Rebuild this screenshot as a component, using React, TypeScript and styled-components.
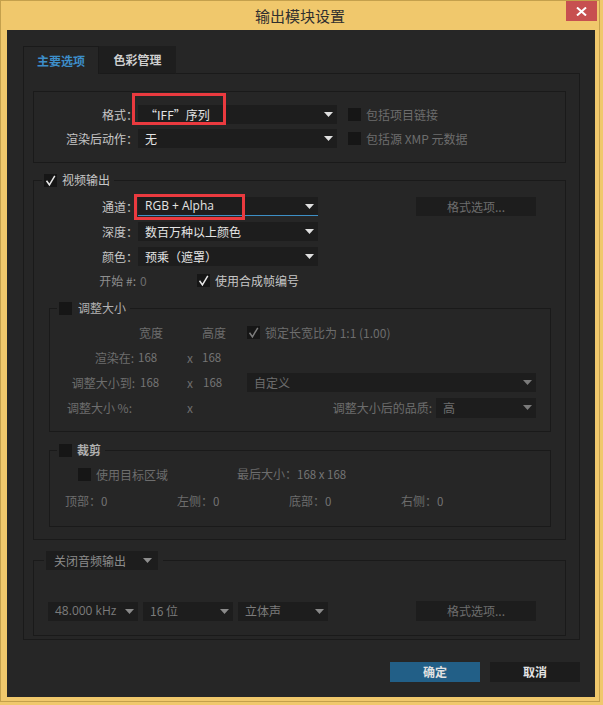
import React from "react";
import styled, { createGlobalStyle } from "styled-components";

const CJK = `"Noto Sans CJK SC", "Noto Sans", sans-serif`;
const LATIN = `"Open Sans", "Noto Sans CJK SC", sans-serif`;

const LINE = "#1a1a1a";
const BG = "#262626";
const FIELD = "#1d1d1d";
const TEXT = "#c6c6c6";
const BRIGHT = "#e4e4e4";
const DIM = "#6d6d6d";

const GlobalStyle = createGlobalStyle`
  *, *::before, *::after { box-sizing: border-box; }
  html, body { margin: 0; padding: 0; background: #f0c86c; }
  body { font-family: ${CJK}; font-size: 12px; line-height: 1; }
`;

const Window = styled.div`
  width: 603px;
  height: 705px;
  background: #f0c86c;
  overflow: hidden;
`;

const Frame = styled.div`
  width: 600px;
  height: 702px;
  border: 1px solid #c4a04c;
  display: flex;
  flex-direction: column;
`;

const TitleBar = styled.div`
  flex: none;
  height: 29px;
  display: grid;
  grid-template-columns: 1fr auto 1fr;
  align-items: center;
`;

const Title = styled.div`
  grid-column: 2;
  font-size: 15px;
  color: #2f2f2f;
  line-height: 29px;
`;

const CloseCell = styled.div`
  grid-column: 3;
  justify-self: end;
  align-self: start;
  margin-right: 2px;
`;

const CloseButton = styled.div`
  width: 31px;
  height: 20px;
  background: #c75050;
  display: flex;
  align-items: center;
  justify-content: center;
`;

const Body = styled.div`
  flex: 1;
  margin: 0 4px 4px 6px;
  background: ${BG};
  padding: 16px 15px 0 16px;
  display: flex;
  flex-direction: column;
`;

const TabBar = styled.div`
  display: flex;
  height: 28px;
`;

const Tab = styled.div<{ $active?: boolean; $w: number }>`
  width: ${(p) => p.$w}px;
  height: 28px;
  display: flex;
  align-items: center;
  justify-content: center;
  font-weight: bold;
  font-size: 12px;
  color: ${(p) => (p.$active ? "#3d8ec9" : "#cfcfcf")};
  background: ${(p) => (p.$active ? BG : "#1e1e1e")};
  border: 1px solid ${(p) => (p.$active ? LINE : "#1e1e1e")};
  border-bottom: ${(p) => (p.$active ? "none" : `1px solid ${LINE}`)};
  padding-top: ${(p) => (p.$active ? 1 : 0)}px;
`;

const TabFill = styled.div`
  flex: 1;
  border-bottom: 1px solid ${LINE};
`;

const Panel = styled.div`
  border: 1px solid ${LINE};
  border-top: none;
  padding: 17px 13px 3px 9px;
`;

const Group = styled.fieldset<{ $mt?: number; $mx?: [number, number] }>`
  margin: ${(p) => p.$mt ?? 0}px ${(p) => (p.$mx ? p.$mx[1] : 0)}px 0
    ${(p) => (p.$mx ? p.$mx[0] : 0)}px;
  padding: 0;
  min-width: 0;
  border: 1px solid ${LINE};
`;

const FormatGroup = styled(Group)`
  padding: 13px 0 14px 0;
  display: flex;
  flex-direction: column;
  gap: 5px;
`;

const Legend = styled.legend<{ $ml: number; $h?: number; $gap?: number; $pr?: number }>`
  margin-left: ${(p) => p.$ml}px;
  padding: 0 ${(p) => p.$pr ?? 4}px 0 2px;
  height: ${(p) => p.$h ?? 16}px;
  display: flex;
  align-items: center;
  gap: ${(p) => p.$gap ?? 5}px;
`;

const LegendText = styled.span<{ $tone?: string; $bold?: boolean }>`
  color: ${(p) => p.$tone ?? TEXT};
  font-weight: ${(p) => (p.$bold ? "bold" : "normal")};
  white-space: nowrap;
`;

const FormRow = styled.div`
  display: flex;
  align-items: center;
  height: 19px;
`;

const Label = styled.div<{ $w: number; $tone?: string; $pr?: number }>`
  flex: none;
  width: ${(p) => p.$w}px;
  padding-right: ${(p) => p.$pr ?? 0}px;
  text-align: right;
  white-space: nowrap;
  color: ${(p) => p.$tone ?? TEXT};
`;

const SelectBox = styled.div<{
  $w: number;
  $h?: number;
  $accent?: boolean;
  $tone?: string;
  $latin?: boolean;
  $pl?: number;
  $pr?: number;
}>`
  flex: none;
  display: flex;
  align-items: center;
  justify-content: space-between;
  width: ${(p) => p.$w}px;
  height: ${(p) => p.$h ?? 19}px;
  padding: 0 ${(p) => p.$pr ?? 4}px 0 ${(p) => p.$pl ?? 7}px;
  background: ${FIELD};
  color: ${(p) => p.$tone ?? BRIGHT};
  font-family: ${(p) => (p.$latin ? LATIN : CJK)};
  border-bottom: ${(p) => (p.$accent ? "1px solid #3d8fc5" : "none")};
  white-space: nowrap;
`;

const Annotated = styled.div`
  position: relative;
  flex: none;
`;

const Annot = styled.div<{ $l: number; $t: number; $w: number; $h: number }>`
  position: absolute;
  left: ${(p) => p.$l}px;
  top: ${(p) => p.$t}px;
  width: ${(p) => p.$w}px;
  height: ${(p) => p.$h}px;
  border: 3px solid #ea3a3f;
  pointer-events: none;
`;

const Box = styled.div`
  flex: none;
  width: 13px;
  height: 13px;
  background: #161616;
  display: flex;
  align-items: center;
  justify-content: center;
`;

const CheckItem = styled.div<{ $ml?: number; $tone?: string; $gap?: number }>`
  display: flex;
  align-items: center;
  gap: ${(p) => p.$gap ?? 5}px;
  margin-left: ${(p) => p.$ml ?? 0}px;
  color: ${(p) => p.$tone ?? TEXT};
  white-space: nowrap;
`;

const FlatButton = styled.div<{ $w: number; $h?: number; $ml?: number }>`
  flex: none;
  width: ${(p) => p.$w}px;
  height: ${(p) => p.$h ?? 19}px;
  margin-left: ${(p) => p.$ml ?? 0}px;
  background: ${FIELD};
  color: ${DIM};
  display: flex;
  align-items: center;
  justify-content: center;
`;

const VideoGroup = styled(Group)`
  padding: 0 0 12px 0;
`;

const VideoGrid = styled.div`
  margin-top: 9px;
  display: grid;
  grid-template-columns: 104px 180px 98px 120px;
  grid-template-rows: 19px 19px 19px 17px;
  row-gap: 6px;
  align-items: center;
`;

const StartCell = styled.div`
  display: flex;
  align-items: center;
`;

const Zero = styled.span`
  width: 59px;
  padding-left: 2px;
  color: ${DIM};
`;

const SubGroup = styled(Group)<{ $pb: number }>`
  padding: 0 0 ${(p) => p.$pb}px 0;
`;

const ResizeGrid = styled.div`
  margin-top: 7px;
  display: grid;
  grid-template-columns: 87px 48px 15px 47px 289px;
  grid-auto-rows: 19px;
  row-gap: 6px;
  align-items: center;
`;

const Cell = styled.div<{ $pl?: number; $pr?: number; $right?: boolean; $tone?: string; $col?: number }>`
  ${(p) => (p.$col ? `grid-column: ${p.$col};` : "")}
  padding-left: ${(p) => p.$pl ?? 0}px;
  padding-right: ${(p) => p.$pr ?? 0}px;
  text-align: ${(p) => (p.$right ? "right" : "left")};
  color: ${(p) => p.$tone ?? DIM};
  white-space: nowrap;
`;

const Num = styled.span`
  font-size: 11.5px;
  color: #747474;
`;

const QualityCell = styled.div`
  grid-column: 5;
  display: flex;
  align-items: center;
  justify-content: flex-end;
  gap: 4px;
  color: ${DIM};
  white-space: nowrap;
`;

const CropRow = styled.div<{ $mt: number; $pl: number }>`
  margin-top: ${(p) => p.$mt}px;
  padding-left: ${(p) => p.$pl}px;
  height: 15px;
  display: flex;
  align-items: center;
  color: ${DIM};
  white-space: nowrap;
`;

const CropItem = styled.div<{ $w: number }>`
  flex: none;
  width: ${(p) => p.$w}px;
  color: ${DIM};
`;

const AudioGroup = styled(Group)`
  padding: 0 0 14px 0;
`;

const AudioRow = styled.div`
  margin-top: 31px;
  padding-left: 14px;
  display: flex;
  align-items: center;
  gap: 5px;
  height: 20px;
`;

const Footer = styled.div`
  margin-top: 22px;
  display: flex;
  justify-content: flex-end;
  gap: 10px;
`;

const DialogButton = styled.div<{ $primary?: boolean }>`
  width: 90px;
  height: 20px;
  background: ${(p) => (p.$primary ? "#225f87" : "#1c1c1c")};
  color: #e2e2e2;
  font-weight: bold;
  display: flex;
  align-items: center;
  justify-content: center;
`;

const Caret = ({ color = "#e0e0e0" }: { color?: string }) => (
  <svg width="9" height="5" viewBox="0 0 9 5" style={{ flex: "none" }}>
    <polygon points="0,0 9,0 4.5,5" fill={color} />
  </svg>
);

const Check = ({ color = "#e8e8e8" }: { color?: string }) => (
  <svg width="13" height="13" viewBox="0 0 13 13">
    <path d="M2.5 6.8 L5.4 10.8 L10.8 1.8" stroke={color} strokeWidth="1.5" fill="none" />
  </svg>
);

const CheckBox = ({ checked, color }: { checked?: boolean; color?: string }) => (
  <Box>{checked ? <Check color={color} /> : null}</Box>
);

type SelProps = {
  w: number;
  text: string;
  h?: number;
  accent?: boolean;
  tone?: string;
  caret?: string;
  latin?: boolean;
  pl?: number;
  pr?: number;
};

const Select = ({ w, text, h, accent, tone, caret, latin, pl, pr }: SelProps) => (
  <SelectBox $w={w} $h={h} $accent={accent} $tone={tone} $latin={latin} $pl={pl} $pr={pr}>
    <span>{text}</span>
    <Caret color={caret} />
  </SelectBox>
);

export default function App() {
  return (
    <>
      <GlobalStyle />
      <Window>
        <Frame>
          <TitleBar>
            <Title>输出模块设置</Title>
            <CloseCell>
              <CloseButton>
                <svg width="11" height="9" viewBox="0 0 11 9">
                  <path d="M1 0.5 L10 8.5 M10 0.5 L1 8.5" stroke="#ffffff" strokeWidth="2" />
                </svg>
              </CloseButton>
            </CloseCell>
          </TitleBar>
          <Body>
            <TabBar>
              <Tab $active $w={76}>
                主要选项
              </Tab>
              <Tab $w={77}>色彩管理</Tab>
              <TabFill />
            </TabBar>
            <Panel>
              <FormatGroup>
                <FormRow>
                  <Label $w={104}>格式：</Label>
                  <Annotated>
                    <Select w={199} text="“IFF”序列" />
                    <Annot $l={-6} $t={-12} $w={94} $h={32} />
                  </Annotated>
                  <CheckItem $ml={11} $tone={DIM}>
                    <CheckBox />
                    包括项目链接
                  </CheckItem>
                </FormRow>
                <FormRow>
                  <Label $w={104}>渲染后动作：</Label>
                  <Select w={199} text="无" />
                  <CheckItem $ml={11} $tone={DIM}>
                    <CheckBox />
                    包括源 XMP 元数据
                  </CheckItem>
                </FormRow>
              </FormatGroup>

              <VideoGroup $mt={9}>
                <Legend $ml={8}>
                  <CheckBox checked />
                  <LegendText>视频输出</LegendText>
                </Legend>
                <VideoGrid>
                  <Label $w={104}>通道：</Label>
                  <Annotated>
                    <Select w={180} text="RGB + Alpha" accent latin />
                    <Annot $l={-4} $t={-3} $w={111} $h={26} />
                  </Annotated>
                  <span />
                  <FlatButton $w={120}>格式选项...</FlatButton>

                  <Label $w={104}>深度：</Label>
                  <Select w={180} text="数百万种以上颜色" />
                  <span />
                  <span />

                  <Label $w={104}>颜色：</Label>
                  <Select w={180} text="预乘（遮罩）" />
                  <span />
                  <span />

                  <Label $w={104} $pr={2} $tone="#8e8e8e">
                    开始 #:
                  </Label>
                  <StartCell>
                    <Zero>0</Zero>
                    <CheckItem>
                      <CheckBox checked />
                      使用合成帧编号
                    </CheckItem>
                  </StartCell>
                  <span />
                  <span />
                </VideoGrid>

                <SubGroup $mt={11} $mx={[15, 14]} $pb={14}>
                  <Legend $ml={7} $gap={6}>
                    <CheckBox />
                    <LegendText $tone="#b2b2b2">调整大小</LegendText>
                  </Legend>
                  <ResizeGrid>
                    <Cell $col={2} $pl={2}>
                      宽度
                    </Cell>
                    <Cell $col={4} $pl={2}>
                      高度
                    </Cell>
                    <Cell $col={5}>
                      <CheckItem $tone={DIM} $gap={5}>
                        <CheckBox checked color="#7c7c7c" />
                        锁定长宽比为 1:1 (1.00)
                      </CheckItem>
                    </Cell>

                    <Cell $right $pr={3}>
                      渲染在:
                    </Cell>
                    <Cell $pl={1}>
                      <Num>168</Num>
                    </Cell>
                    <Cell $pl={2}>x</Cell>
                    <Cell $pl={2}>
                      <Num>168</Num>
                    </Cell>
                    <span />

                    <Cell $right $pr={2}>
                      调整大小到:
                    </Cell>
                    <Cell $pl={3}>
                      <Num>168</Num>
                    </Cell>
                    <Cell $pl={2}>x</Cell>
                    <Cell $pl={3}>
                      <Num>168</Num>
                    </Cell>
                    <Select w={289} text="自定义" tone={DIM} caret="#7a7a7a" />

                    <Cell $right $pr={5}>
                      调整大小 %:
                    </Cell>
                    <span />
                    <Cell $pl={2}>x</Cell>
                    <span />
                    <QualityCell>
                      调整大小后的品质:
                      <Select w={100} h={20} text="高" tone={DIM} caret="#7a7a7a" />
                    </QualityCell>
                  </ResizeGrid>
                </SubGroup>

                <SubGroup $mt={10} $mx={[15, 14]} $pb={17}>
                  <Legend $ml={7} $gap={5}>
                    <CheckBox />
                    <LegendText $tone="#b0b0b0" $bold>
                      裁剪
                    </LegendText>
                  </Legend>
                  <CropRow $mt={9} $pl={28}>
                    <CropItem $w={159}>
                      <CheckItem $tone={DIM}>
                        <CheckBox />
                        使用目标区域
                      </CheckItem>
                    </CropItem>
                    <CropItem $w={200}>
                      最后大小：<Num>168 x 168</Num>
                    </CropItem>
                  </CropRow>
                  <CropRow $mt={12} $pl={15}>
                    <CropItem $w={112}>
                      顶部：<Num>0</Num>
                    </CropItem>
                    <CropItem $w={112}>
                      左侧：<Num>0</Num>
                    </CropItem>
                    <CropItem $w={112}>
                      底部：<Num>0</Num>
                    </CropItem>
                    <CropItem $w={112}>
                      右侧：<Num>0</Num>
                    </CropItem>
                  </CropRow>
                </SubGroup>
              </VideoGroup>

              <AudioGroup $mt={11}>
                <Legend $ml={10} $h={19} $pr={5}>
                  <Select w={112} text="关闭音频输出" tone="#8c8c8c" caret="#8e8e8e" pl={8} pr={6} />
                </Legend>
                <AudioRow>
                  <Select w={90} text="48.000 kHz" tone="#7c7c7c" caret="#8a8a8a" latin />
                  <Select w={90} text="16 位" tone="#7c7c7c" caret="#8a8a8a" />
                  <Select w={90} text="立体声" tone="#7c7c7c" caret="#8a8a8a" />
                  <FlatButton $w={120} $h={20} $ml={83}>
                    格式选项...
                  </FlatButton>
                </AudioRow>
              </AudioGroup>
            </Panel>
            <Footer>
              <DialogButton $primary>确定</DialogButton>
              <DialogButton>取消</DialogButton>
            </Footer>
          </Body>
        </Frame>
      </Window>
    </>
  );
}
